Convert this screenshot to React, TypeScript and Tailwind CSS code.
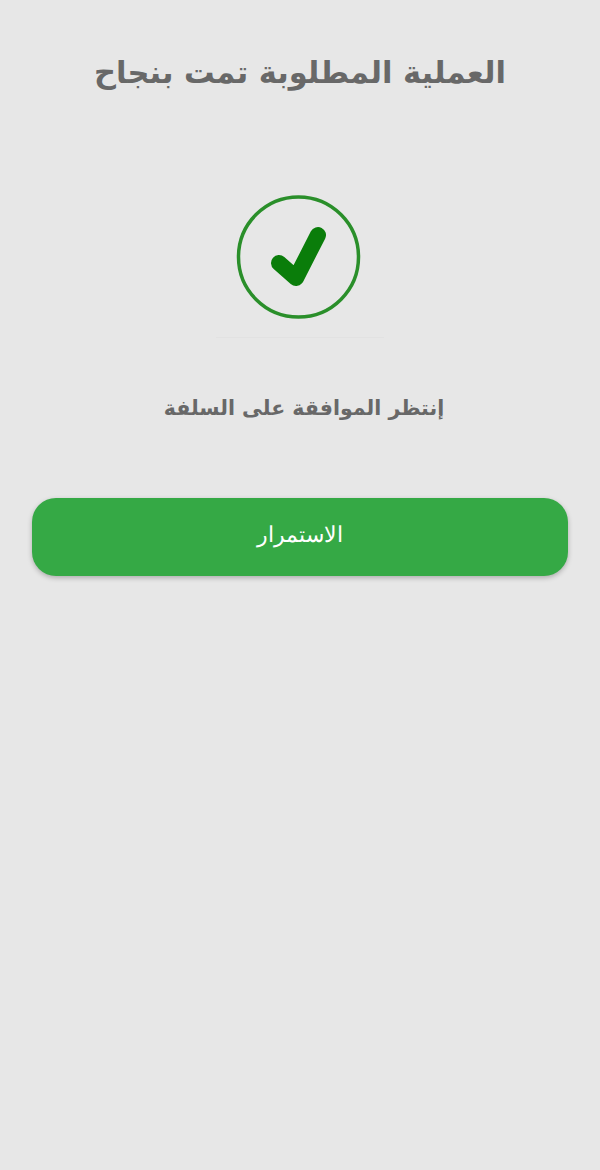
export default function App() {
  return (
    <div dir="rtl" className="flex min-h-[1170px] w-[600px] flex-col items-center bg-[#e7e7e7] font-['DejaVu_Sans',sans-serif]">
      <h1 className="mt-[48px] text-[30.5px] leading-[50px] font-bold text-[#686868]">العملية المطلوبة تمت بنجاح</h1>
      <svg viewBox="0 0 126 124" className="mt-[97px] mr-[3px] h-[124px] w-[126px]" fill="none">
        <circle cx="62.5" cy="62" r="60" stroke="#2a8f2a" strokeWidth="3.5" />
        <path d="M43 68 L60 83 L82 40" stroke="#0a7d0a" strokeWidth="16" strokeLinecap="round" strokeLinejoin="round" />
      </svg>
      <div className="mt-[18px] h-px w-[168px] bg-[#e2e2e2]" />
      <p className="mt-[52px] pl-[8px] text-[20.5px] leading-[36px] font-bold text-[#686868]">إنتظر الموافقة على السلفة</p>
      <button className="mt-[72px] h-[78px] w-[536px] rounded-[24px] bg-[#35a945] pb-[4px] font-['Liberation_Serif',serif] text-[21.5px] text-white shadow-[0_2px_5px_rgba(0,0,0,0.25)]">الاستمرار</button>
    </div>
  )
}
